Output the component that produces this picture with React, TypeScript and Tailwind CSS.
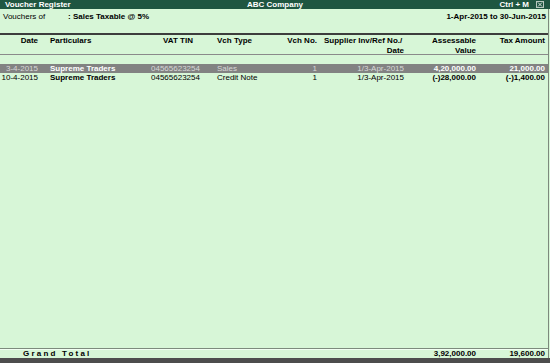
import React from 'react';

type Row = {
  date: string;
  party: string;
  tin: string;
  type: string;
  no: string;
  ref: string;
  value: string;
  tax: string;
  selected?: boolean;
};

const rows: Row[] = [
  { date: '3-4-2015', party: 'Supreme Traders', tin: '04565623254', type: 'Sales', no: '1', ref: '1/3-Apr-2015', value: '4,20,000.00', tax: '21,000.00', selected: true },
  { date: '10-4-2015', party: 'Supreme Traders', tin: '04565623254', type: 'Credit Note', no: '1', ref: '1/3-Apr-2015', value: '(-)28,000.00', tax: '(-)1,400.00' },
];

const cols = 'grid grid-cols-[39px_112px_66px_63px_37px_87px_72px_69px]';

const App: React.FC = () => {
  return (
    <div className="w-[550px] h-[363px] flex flex-col bg-[#d7f6d7] text-[8px] text-black overflow-hidden" style={{ fontFamily: '"Liberation Sans", Arial, sans-serif' }}>
      {/* title bar */}
      <div className="h-[9px] bg-[#1f5641] text-white font-bold flex items-center leading-[9px] relative">
        <span className="pl-[5px]">Voucher Register</span>
        <span className="absolute left-[245px] w-[60px] text-center">ABC Company</span>
        <span className="ml-auto pr-[7px]">Ctrl + M</span>
        <span className="w-[8px] h-[7px] mr-[6px] border border-[#b8c8bf] flex items-center justify-center">
          <svg width="6" height="5" viewBox="0 0 6 5">
            <path d="M1 0.5 L5 4.5 M5 0.5 L1 4.5" stroke="#d8e4dc" strokeWidth="1" />
          </svg>
        </span>
      </div>

      <div className="flex-1 flex flex-col border-r border-[#7c8a7c] mr-[1px]">
        {/* vouchers of */}
        <div className="flex items-center h-[14px] leading-[10px] pt-[2px]">
          <span className="pl-[3px] w-[68px]">Vouchers of</span>
          <span className="font-bold">: Sales Taxable @ 5%</span>
          <span className="ml-auto font-bold pr-[2px]">1-Apr-2015 to 30-Jun-2015</span>
        </div>

        <div className="h-[10px]" />
        <div className="border-t-2 border-[#3d3d3d]" />

        {/* header */}
        <div className={`${cols} font-bold leading-[10px] pt-[1px] h-[19px]`}>
          <div className="text-right pr-[1px]">Date</div>
          <div className="pl-[11px]">Particulars</div>
          <div className="pl-[12px]">VAT TIN</div>
          <div>Vch Type</div>
          <div className="text-right">Vch No.</div>
          <div className="text-right">
            <div className="pl-[7px] text-left">Supplier Inv/Ref No./</div>
            <div>Date</div>
          </div>
          <div className="text-right">
            <div>Assessable</div>
            <div>Value</div>
          </div>
          <div className="text-right">Tax Amount</div>
        </div>
        <div className="border-t border-[#8a8a8a]" />

        <div className="h-[9px]" />

        {/* rows */}
        {rows.map((r) => (
          <div
            key={r.date}
            className={`${cols} h-[9px] leading-[9px] ${r.selected ? 'bg-[#828282] text-[#d8d8d8]' : ''}`}
          >
            <div className="text-right pr-[1px]">{r.date}</div>
            <div className={`pl-[11px] font-bold ${r.selected ? 'text-white' : ''}`}>{r.party}</div>
            <div>{r.tin}</div>
            <div>{r.type}</div>
            <div className="text-right">{r.no}</div>
            <div className="text-right">{r.ref}</div>
            <div className={`text-right font-bold ${r.selected ? 'text-white' : ''}`}>{r.value}</div>
            <div className={`text-right font-bold ${r.selected ? 'text-white' : ''}`}>{r.tax}</div>
          </div>
        ))}

        <div className="flex-1" />

        {/* grand total */}
        <div className="border-t border-[#7d8a7d]" />
        <div className="border-t border-[#f2fff2]" />
        <div className={`${cols} h-[8px] leading-[8px] font-bold`}>
          <div className="col-span-3 pl-[23px] tracking-[2.2px]">Grand Total</div>
          <div />
          <div />
          <div />
          <div className="text-right">3,92,000.00</div>
          <div className="text-right">19,600.00</div>
        </div>
      </div>
      <div className="h-[5px] bg-[#4d4d4d]" />
    </div>
  );
};

export default App;
